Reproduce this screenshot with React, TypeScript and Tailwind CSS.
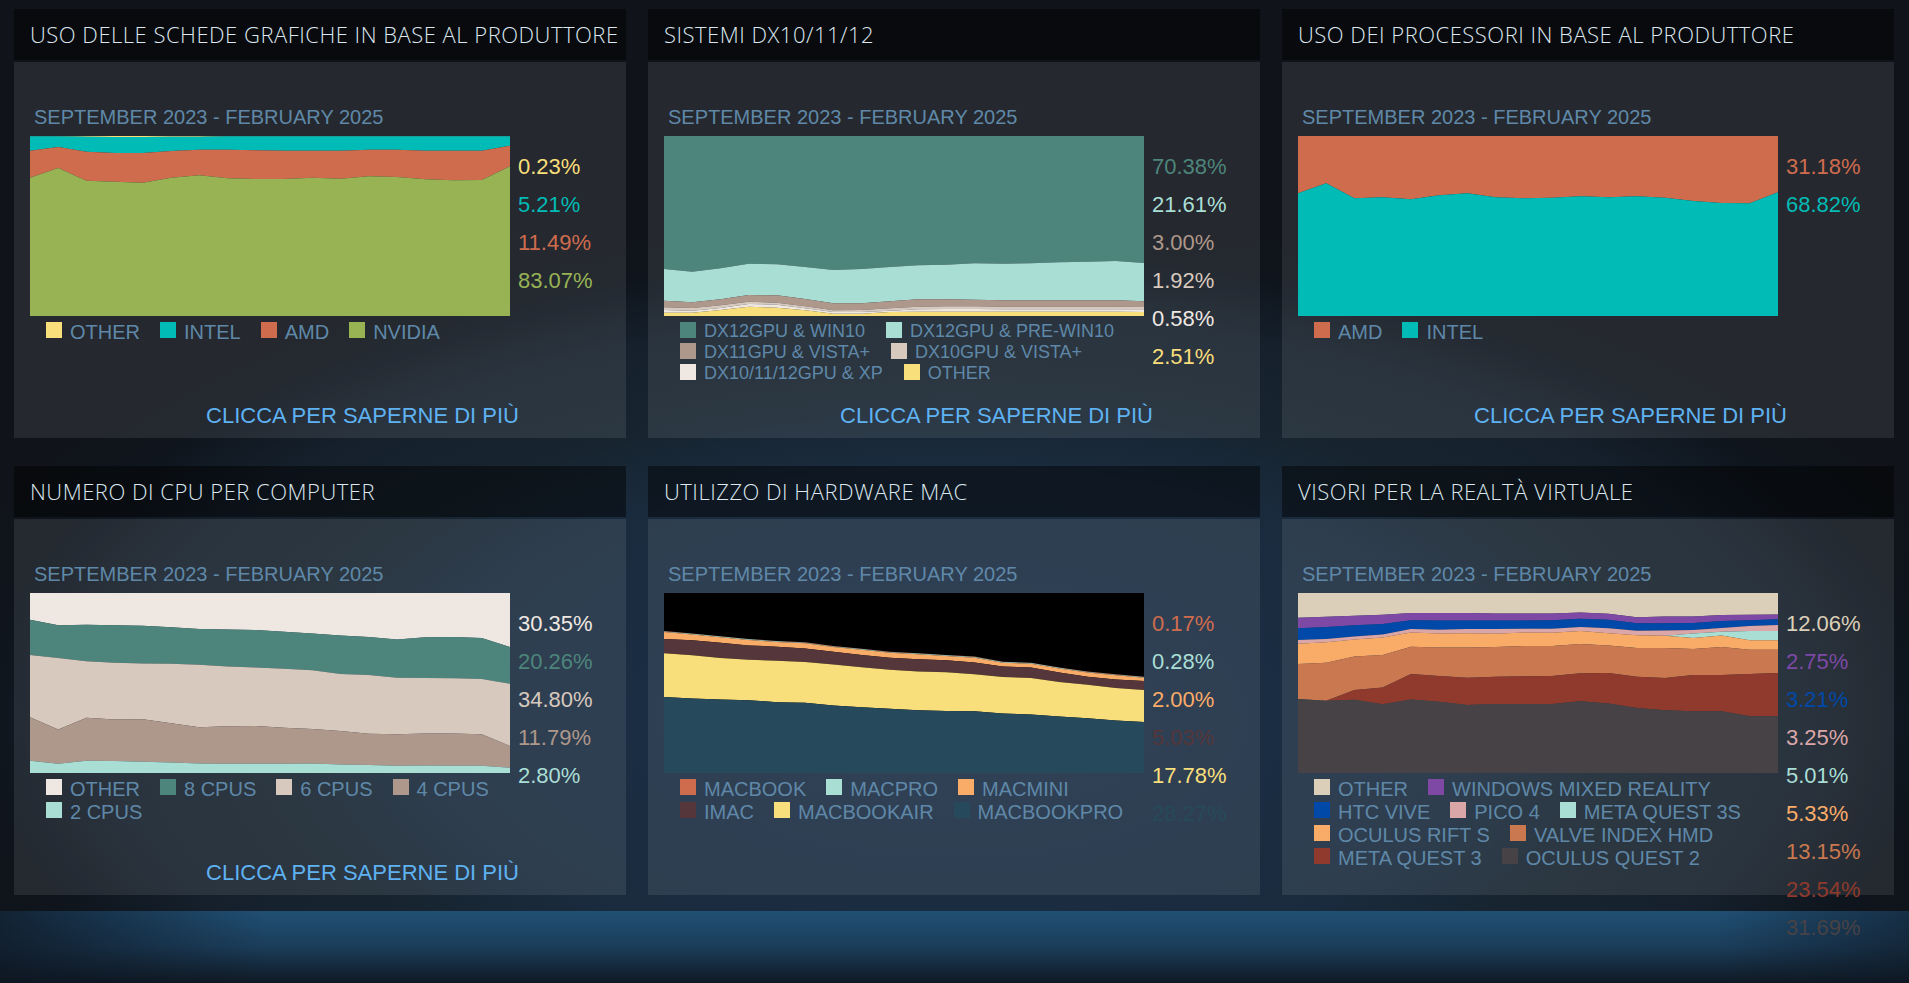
import React from "react";

const C = {
  yellow: "#f9df7b",
  teal: "#01bcb6",
  orange: "#d06c4e",
  green: "#98b354",
  dteal: "#4d857c",
  mint: "#a9ded5",
  taupe: "#ae978b",
  sand: "#d8c9be",
  cream: "#efe8e2",
  apricot: "#f9ab68",
  plum: "#55363a",
  navy: "#264a5b",
  beige: "#dccfb9",
  purple: "#7d49a5",
  blue: "#0049a8",
  pink: "#dba6a8",
  clay: "#c9784f",
  brick: "#8f3a2c",
  coal: "#474245",
};

type Series = { name: string; color: string; value: string };
type ChartSpec = {
  title: string;
  series: Series[];
  // lower edge of every series but the last, in reference zoom units
  edges: number[][];
  top: number;
  scale: number;
  bg?: string;
  link?: boolean;
  small?: boolean;
};

const panels: ChartSpec[] = [
  {
    title: "USO DELLE SCHEDE GRAFICHE IN BASE AL PRODUTTORE",
    top: 408,
    scale: 3,
    link: true,
    series: [
      { name: "OTHER", color: C.yellow, value: "0.23%" },
      { name: "INTEL", color: C.teal, value: "5.21%" },
      { name: "AMD", color: C.orange, value: "11.49%" },
      { name: "NVIDIA", color: C.green, value: "83.07%" },
    ],
    edges: [
      [409, 409, 410, 411, 411, 410, 410, 409, 409, 409, 409, 409, 409, 409, 409, 409, 409, 409],
      [452, 441, 455, 459, 459, 453, 449, 449, 451, 452, 452, 452, 449, 449, 452, 452, 452, 437],
      [533, 504, 542, 545, 548, 533, 526, 535, 537, 537, 533, 536, 529, 531, 538, 541, 540, 499],
    ],
  },
  {
    title: "SISTEMI DX10/11/12",
    top: 408,
    scale: 3,
    link: true,
    small: true,
    series: [
      { name: "DX12GPU & WIN10", color: C.dteal, value: "70.38%" },
      { name: "DX12GPU & PRE-WIN10", color: C.mint, value: "21.61%" },
      { name: "DX11GPU & VISTA+", color: C.taupe, value: "3.00%" },
      { name: "DX10GPU & VISTA+", color: C.sand, value: "1.92%" },
      { name: "DX10/11/12GPU & XP", color: C.cream, value: "0.58%" },
      { name: "OTHER", color: C.yellow, value: "2.51%" },
    ],
    edges: [
      [807, 815, 805, 791, 793, 801, 810, 807, 801, 796, 794, 790, 791, 790, 787, 785, 783, 789],
      [902, 907, 898, 885, 886, 897, 910, 910, 904, 898, 898, 899, 901, 901, 901, 901, 901, 904],
      [922, 924, 916, 905, 908, 919, 931, 930, 925, 920, 919, 919, 920, 920, 920, 920, 920, 921],
      [930, 932, 924, 912, 914, 925, 936, 936, 932, 928, 927, 927, 928, 928, 928, 928, 928, 928],
      [938, 938, 930, 920, 923, 931, 941, 941, 936, 935, 935, 935, 935, 935, 935, 935, 935, 936],
    ],
  },
  {
    title: "USO DEI PROCESSORI IN BASE AL PRODUTTORE",
    top: 408,
    scale: 3,
    link: true,
    series: [
      { name: "AMD", color: C.orange, value: "31.18%" },
      { name: "INTEL", color: C.teal, value: "68.82%" },
    ],
    edges: [[580, 550, 595, 592, 598, 586, 580, 592, 595, 593, 589, 592, 589, 593, 603, 609, 610, 577]],
  },
  {
    title: "NUMERO DI CPU PER COMPUTER",
    top: 421,
    scale: 2.94,
    link: true,
    series: [
      { name: "OTHER", color: C.cream, value: "30.35%" },
      { name: "8 CPUS", color: C.dteal, value: "20.26%" },
      { name: "6 CPUS", color: C.sand, value: "34.80%" },
      { name: "4 CPUS", color: C.taupe, value: "11.79%" },
      { name: "2 CPUS", color: C.mint, value: "2.80%" },
    ],
    edges: [
      [500, 516, 514, 516, 517, 522, 527, 528, 530, 535, 540, 546, 550, 558, 551, 550, 553, 580],
      [603, 612, 622, 626, 628, 629, 632, 637, 640, 644, 648, 659, 662, 670, 671, 672, 674, 688],
      [786, 822, 788, 793, 792, 804, 816, 813, 812, 817, 821, 827, 835, 836, 834, 834, 836, 871],
      [914, 923, 914, 915, 917, 919, 922, 923, 923, 923, 922, 925, 927, 929, 928, 929, 929, 935],
    ],
  },
  {
    title: "UTILIZZO DI HARDWARE MAC",
    top: 421,
    scale: 2.94,
    bg: "#000000",
    series: [
      { name: "MACBOOK", color: C.orange, value: "0.17%" },
      { name: "MACPRO", color: C.mint, value: "0.28%" },
      { name: "MACMINI", color: C.apricot, value: "2.00%" },
      { name: "IMAC", color: C.plum, value: "5.03%" },
      { name: "MACBOOKAIR", color: C.yellow, value: "17.78%" },
      { name: "MACBOOKPRO", color: C.navy, value: "28.27%" },
    ],
    edges: [
      [533, 540, 548, 556, 562, 566, 577, 585, 594, 598, 603, 608, 623, 626, 640, 652, 660, 667],
      [534, 541, 549, 557, 563, 567, 578, 586, 595, 599, 604, 609, 624, 627, 641, 653, 661, 668],
      [536, 543, 551, 559, 565, 569, 580, 588, 597, 601, 606, 611, 626, 629, 643, 655, 663, 670],
      [556, 560, 567, 575, 579, 584, 594, 603, 611, 616, 619, 625, 637, 640, 655, 667, 675, 680],
      [598, 604, 612, 617, 620, 624, 631, 639, 647, 652, 654, 660, 668, 671, 683, 691, 700, 706],
      [727, 731, 734, 736, 742, 744, 752, 757, 761, 766, 768, 769, 775, 778, 784, 789, 796, 800],
    ],
  },
  {
    title: "VISORI PER LA REALTÀ VIRTUALE",
    top: 421,
    scale: 2.94,
    series: [
      { name: "OTHER", color: C.beige, value: "12.06%" },
      { name: "WINDOWS MIXED REALITY", color: C.purple, value: "2.75%" },
      { name: "HTC VIVE", color: C.blue, value: "3.21%" },
      { name: "PICO 4", color: C.pink, value: "3.25%" },
      { name: "META QUEST 3S", color: C.mint, value: "5.01%" },
      { name: "OCULUS RIFT S", color: C.apricot, value: "5.33%" },
      { name: "VALVE INDEX HMD", color: C.clay, value: "13.15%" },
      { name: "META QUEST 3", color: C.brick, value: "23.54%" },
      { name: "OCULUS QUEST 2", color: C.coal, value: "31.69%" },
    ],
    edges: [
      [494, 491, 488, 485, 480, 480, 480, 481, 481, 481, 478, 482, 492, 490, 490, 486, 485, 484],
      [525, 521, 516, 512, 501, 502, 502, 502, 502, 501, 497, 500, 510, 510, 509, 503, 501, 498],
      [559, 556, 549, 543, 527, 529, 527, 527, 526, 526, 521, 525, 532, 531, 530, 524, 518, 515],
      [570, 566, 558, 552, 537, 540, 539, 541, 537, 538, 533, 539, 545, 547, 540, 535, 533, 533],
      [570, 566, 558, 552, 537, 540, 539, 541, 537, 538, 533, 539, 545, 547, 553, 546, 560, 560],
      [630, 626, 608, 603, 579, 581, 581, 580, 577, 577, 571, 575, 583, 583, 586, 580, 588, 588],
      [733, 738, 706, 699, 659, 665, 670, 667, 666, 665, 657, 656, 667, 671, 662, 662, 659, 656],
      [733, 738, 735, 748, 734, 741, 750, 747, 747, 747, 739, 746, 759, 766, 769, 769, 783, 783],
    ],
  },
];

function Chart({ spec }: { spec: ChartSpec }) {
  const w = 480;
  const h = 180;
  const x = (i: number) => (i * w) / 17;
  const y = (v: number) => (v - spec.top) / spec.scale;
  // On a chart with its own background the first edge row is the top of the stack.
  const lines: number[][] = [
    ...(spec.bg ? [] : [Array(18).fill(0)]),
    ...spec.edges.map((row) => row.map(y)),
    Array(18).fill(h),
  ];
  return (
    <svg width={w} height={h} viewBox={`0 0 ${w} ${h}`} className="block" style={{ background: spec.bg }}>
      {spec.series.map((s, k) => {
        const upper = lines[k].map((v, i) => `${x(i)},${v}`);
        const lower = lines[k + 1].map((v, i) => `${x(i)},${v}`).reverse();
        return <polygon key={s.name} points={[...upper, ...lower].join(" ")} fill={s.color} />;
      })}
    </svg>
  );
}

function Panel({ spec }: { spec: ChartSpec }) {
  return (
    <div className="flex flex-col gap-[2px]">
      <div className="h-[51px] flex items-center pl-[16px] bg-black/45 text-[#dde7ef] text-[22px] tracking-[0.5px] font-light whitespace-nowrap font-['Open_Sans',sans-serif]">
        {spec.title}
      </div>
      <div className="h-[376px] flex flex-col bg-white/[0.09] pl-[16px] pt-[44px] font-['Liberation_Sans',Arial,sans-serif]">
        <div className="pl-[4px] mb-[7px] text-[20px] leading-[23px] text-[#5f88a8] whitespace-nowrap">
          SEPTEMBER 2023 - FEBRUARY 2025
        </div>
        <div className="flex gap-[8px]">
          <div className="w-[480px]">
            <Chart spec={spec} />
            <div
              className={
                spec.small
                  ? "flex flex-wrap gap-x-[21px] pl-[16px] pt-[5px] text-[18px] leading-[21px] text-[#5f88a8]"
                  : "flex flex-wrap gap-x-[20px] pl-[16px] pt-[5px] text-[20px] leading-[23px] text-[#5f88a8]"
              }
            >
              {spec.series.map((s) => (
                <div key={s.name} className="flex items-start gap-[8px] whitespace-nowrap">
                  <span className="w-[16px] h-[16px] mt-[1px] shrink-0" style={{ background: s.color }} />
                  <span>{s.name}</span>
                </div>
              ))}
            </div>
          </div>
          <div className="flex flex-col gap-[13px] pt-[18px] text-[22px] leading-[25px]">
            {spec.series.map((s) => (
              <div key={s.name} style={{ color: s.color }}>
                {s.value}
              </div>
            ))}
          </div>
        </div>
        {spec.link && (
          <div className="mt-auto pb-[10px] pr-[107px] text-right text-[22px] leading-[25px] text-[#5fb2f2] whitespace-nowrap">
            CLICCA PER SAPERNE DI PIÙ
          </div>
        )}
      </div>
    </div>
  );
}

export default function App() {
  return (
    <div className="w-[1909px] h-[983px] overflow-hidden flex flex-col bg-[radial-gradient(ellipse_55%_51%_at_50%_73%,#1c3048_0%,#1a2b3e_50%,#17242f_65%,#15202c_80%,#0f151d_92%,#10131a_100%)]">
      <div className="relative z-10 grid grid-cols-[612px_612px_612px] gap-x-[22px] gap-y-[28px] pl-[14px] pt-[9px]">
        {panels.map((p) => (
          <Panel key={p.title} spec={p} />
        ))}
      </div>
      <div className="mt-auto h-[72px] bg-[linear-gradient(to_right,rgba(14,21,32,0.75)_0%,rgba(14,21,32,0)_14%,rgba(14,21,32,0)_90%,rgba(14,21,32,0.55)_100%),linear-gradient(to_bottom,#204f74_0%,#1b3d5a_50%,#0f1924_100%)]" />
    </div>
  );
}
